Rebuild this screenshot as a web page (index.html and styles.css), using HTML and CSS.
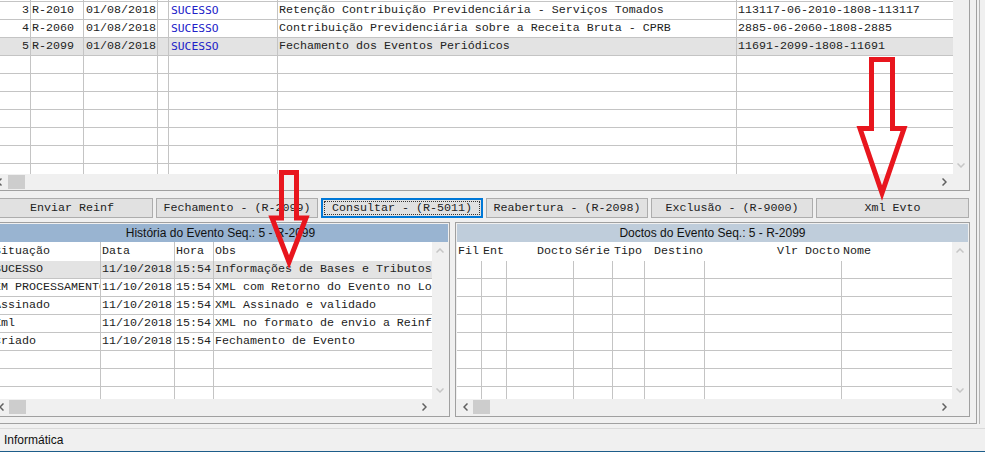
FILE: index.html
```html
<!DOCTYPE html>
<html lang="pt-BR">
<head>
    <meta charset="UTF-8">
    <title>Eventos Reinf</title>
    <link rel="stylesheet" href="styles.css">
</head>
<body>
    <div class="screen">
        <div class="form">
            <!-- Grade de eventos -->
            <div class="events">
                <div class="grid-body">
                    <div class="rows">
                        <div class="row evt-cols cut"><div class="cell"></div><div class="cell"></div><div class="cell"></div><div class="cell"></div><div class="cell"></div><div class="cell"></div><div class="cell"></div></div>
                        <div class="row evt-cols">
                            <div class="cell num">3</div><div class="cell">R-2010</div><div class="cell date">01/08/2018</div><div class="cell"></div>
                            <div class="cell ok"><span>SUCESSO</span></div><div class="cell">Retenção Contribuição Previdenciária - Serviços Tomados</div><div class="cell">113117-06-2010-1808-113117</div>
                        </div>
                        <div class="row evt-cols">
                            <div class="cell num">4</div><div class="cell">R-2060</div><div class="cell date">01/08/2018</div><div class="cell"></div>
                            <div class="cell ok"><span>SUCESSO</span></div><div class="cell">Contribuição Previdenciária sobre a Receita Bruta - CPRB</div><div class="cell">2885-06-2060-1808-2885</div>
                        </div>
                        <div class="row evt-cols sel">
                            <div class="cell num">5</div><div class="cell">R-2099</div><div class="cell date">01/08/2018</div><div class="cell"></div>
                            <div class="cell ok"><span>SUCESSO</span></div><div class="cell">Fechamento dos Eventos Periódicos</div><div class="cell">11691-2099-1808-11691</div>
                        </div>
                        <div class="row evt-cols"><div class="cell"></div><div class="cell"></div><div class="cell"></div><div class="cell"></div><div class="cell"></div><div class="cell"></div><div class="cell"></div></div>
                        <div class="row evt-cols"><div class="cell"></div><div class="cell"></div><div class="cell"></div><div class="cell"></div><div class="cell"></div><div class="cell"></div><div class="cell"></div></div>
                        <div class="row evt-cols"><div class="cell"></div><div class="cell"></div><div class="cell"></div><div class="cell"></div><div class="cell"></div><div class="cell"></div><div class="cell"></div></div>
                        <div class="row evt-cols"><div class="cell"></div><div class="cell"></div><div class="cell"></div><div class="cell"></div><div class="cell"></div><div class="cell"></div><div class="cell"></div></div>
                        <div class="row evt-cols"><div class="cell"></div><div class="cell"></div><div class="cell"></div><div class="cell"></div><div class="cell"></div><div class="cell"></div><div class="cell"></div></div>
                        <div class="row evt-cols"><div class="cell"></div><div class="cell"></div><div class="cell"></div><div class="cell"></div><div class="cell"></div><div class="cell"></div><div class="cell"></div></div>
                        <div class="row evt-cols"><div class="cell"></div><div class="cell"></div><div class="cell"></div><div class="cell"></div><div class="cell"></div><div class="cell"></div><div class="cell"></div></div>
                    </div>
                    <div class="vscroll">
                        <div class="sb-btn"><svg width="8" height="5" viewBox="0 0 8 5"><path class="arr-off" d="M0.5 0.5 4 4 7.5 0.5"/></svg></div>
                    </div>
                </div>
                <div class="hscroll">
                    <div class="sb-btn"><svg width="5" height="8" viewBox="0 0 5 8"><path class="arr" d="M4.5 0.5 1 4 4.5 7.5"/></svg></div>
                    <div class="thumb"></div>
                    <div class="track"></div>
                    <div class="sb-btn"><svg width="5" height="8" viewBox="0 0 5 8"><path class="arr" d="M0.5 0.5 4 4 0.5 7.5"/></svg></div>
                    <div class="corner"></div>
                </div>
            </div>

            <!-- Botões de ação -->
            <div class="actions">
                <button type="button" class="btn">Enviar Reinf</button>
                <button type="button" class="btn">Fechamento - (R-2099)</button>
                <button type="button" class="btn btn-focus">Consultar - (R-5011)</button>
                <button type="button" class="btn">Reabertura - (R-2098)</button>
                <button type="button" class="btn">Exclusão - (R-9000)</button>
                <button type="button" class="btn btn-xml">Xml Evto</button>
            </div>

            <div class="panels">
                <!-- História do evento -->
                <div class="panel history">
                    <div class="panel-title title-active">História do Evento Seq.: 5 - R-2099</div>
                    <div class="grid-body">
                        <div class="rows">
                            <div class="row hist-cols head"><div class="cell">Situação</div><div class="cell">Data</div><div class="cell">Hora</div><div class="cell">Obs</div></div>
                            <div class="row hist-cols sel"><div class="cell">SUCESSO</div><div class="cell">11/10/2018</div><div class="cell">15:54</div><div class="cell">Informações de Bases e Tributos</div></div>
                            <div class="row hist-cols"><div class="cell">EM PROCESSAMENTO</div><div class="cell">11/10/2018</div><div class="cell">15:54</div><div class="cell">XML com Retorno do Evento no Lote</div></div>
                            <div class="row hist-cols"><div class="cell">Assinado</div><div class="cell">11/10/2018</div><div class="cell">15:54</div><div class="cell">XML Assinado e validado</div></div>
                            <div class="row hist-cols"><div class="cell">Xml</div><div class="cell">11/10/2018</div><div class="cell">15:54</div><div class="cell">XML no formato de envio a Reinf</div></div>
                            <div class="row hist-cols"><div class="cell">Criado</div><div class="cell">11/10/2018</div><div class="cell">15:54</div><div class="cell">Fechamento de Evento</div></div>
                            <div class="row hist-cols"><div class="cell"></div><div class="cell"></div><div class="cell"></div><div class="cell"></div></div>
                            <div class="row hist-cols"><div class="cell"></div><div class="cell"></div><div class="cell"></div><div class="cell"></div></div>
                            <div class="row hist-cols"><div class="cell"></div><div class="cell"></div><div class="cell"></div><div class="cell"></div></div>
                        </div>
                        <div class="vscroll">
                            <div class="sb-btn"><svg width="8" height="5" viewBox="0 0 8 5"><path class="arr-off" d="M0.5 4.5 4 1 7.5 4.5"/></svg></div>
                            <div class="sb-btn"><svg width="8" height="5" viewBox="0 0 8 5"><path class="arr-off" d="M0.5 0.5 4 4 7.5 0.5"/></svg></div>
                        </div>
                    </div>
                    <div class="hscroll">
                        <div class="sb-btn"><svg width="5" height="8" viewBox="0 0 5 8"><path class="arr" d="M4.5 0.5 1 4 4.5 7.5"/></svg></div>
                        <div class="thumb"></div>
                        <div class="track"></div>
                        <div class="sb-btn"><svg width="5" height="8" viewBox="0 0 5 8"><path class="arr" d="M0.5 0.5 4 4 0.5 7.5"/></svg></div>
                        <div class="corner"></div>
                    </div>
                </div>

                <!-- Documentos do evento -->
                <div class="panel docs">
                    <div class="panel-title title-inactive">Doctos do Evento Seq.: 5 - R-2099</div>
                    <div class="grid-body">
                        <div class="rows">
                            <div class="row doc-cols head">
                                <div class="cell">Fil</div><div class="cell">Ent</div><div class="cell right">Docto</div><div class="cell">Série</div>
                                <div class="cell">Tipo</div><div class="cell right">Destino</div><div class="cell right">Vlr Docto</div><div class="cell">Nome</div>
                            </div>
                            <div class="row doc-cols"><div class="cell"></div><div class="cell"></div><div class="cell"></div><div class="cell"></div><div class="cell"></div><div class="cell"></div><div class="cell"></div><div class="cell"></div></div>
                            <div class="row doc-cols"><div class="cell"></div><div class="cell"></div><div class="cell"></div><div class="cell"></div><div class="cell"></div><div class="cell"></div><div class="cell"></div><div class="cell"></div></div>
                            <div class="row doc-cols"><div class="cell"></div><div class="cell"></div><div class="cell"></div><div class="cell"></div><div class="cell"></div><div class="cell"></div><div class="cell"></div><div class="cell"></div></div>
                            <div class="row doc-cols"><div class="cell"></div><div class="cell"></div><div class="cell"></div><div class="cell"></div><div class="cell"></div><div class="cell"></div><div class="cell"></div><div class="cell"></div></div>
                            <div class="row doc-cols"><div class="cell"></div><div class="cell"></div><div class="cell"></div><div class="cell"></div><div class="cell"></div><div class="cell"></div><div class="cell"></div><div class="cell"></div></div>
                            <div class="row doc-cols"><div class="cell"></div><div class="cell"></div><div class="cell"></div><div class="cell"></div><div class="cell"></div><div class="cell"></div><div class="cell"></div><div class="cell"></div></div>
                            <div class="row doc-cols"><div class="cell"></div><div class="cell"></div><div class="cell"></div><div class="cell"></div><div class="cell"></div><div class="cell"></div><div class="cell"></div><div class="cell"></div></div>
                            <div class="row doc-cols"><div class="cell"></div><div class="cell"></div><div class="cell"></div><div class="cell"></div><div class="cell"></div><div class="cell"></div><div class="cell"></div><div class="cell"></div></div>
                        </div>
                        <div class="vscroll">
                            <div class="sb-btn"><svg width="8" height="5" viewBox="0 0 8 5"><path class="arr-off" d="M0.5 4.5 4 1 7.5 4.5"/></svg></div>
                            <div class="sb-btn"><svg width="8" height="5" viewBox="0 0 8 5"><path class="arr-off" d="M0.5 0.5 4 4 7.5 0.5"/></svg></div>
                        </div>
                    </div>
                    <div class="hscroll">
                        <div class="sb-btn"><svg width="5" height="8" viewBox="0 0 5 8"><path class="arr" d="M4.5 0.5 1 4 4.5 7.5"/></svg></div>
                        <div class="thumb"></div>
                        <div class="track"></div>
                        <div class="sb-btn"><svg width="5" height="8" viewBox="0 0 5 8"><path class="arr" d="M0.5 0.5 4 4 0.5 7.5"/></svg></div>
                        <div class="corner"></div>
                    </div>
                </div>
            </div>
        </div>
        <div class="edge"></div>
    </div>

    <div class="status">Informática</div>

    <!-- Setas de destaque desenhadas sobre a tela -->
    <svg class="marks" width="985" height="452" viewBox="0 0 985 452">
        <path d="M281.5 172.5H296.5V218H306L289 262L272 218H281.5Z"/>
        <path d="M871.5 59.5H892.5V128.5H904L882 193L860 128.5H871.5Z"/>
    </svg>
</body>
</html>
```

FILE: styles.css
```css
* {
    box-sizing: border-box;
}

body {
    margin: 0;
    width: 985px;
    height: 452px;
    overflow: hidden;
    position: relative;
    background-color: #f0f0f0;
    font-family: "Liberation Mono", "Courier New", monospace;
    font-size: 11.67px;
    color: #222;
}

.screen {
    display: flex;
    height: 424px;
}

.form {
    flex: none;
    width: 986px;
    margin-left: -9px;
    padding-right: 6px;
    border-right: 1px solid #a0a0a0;
    border-bottom: 1px solid #a0a0a0;
}

.edge {
    flex: none;
    width: 6px;
    margin-left: 2px;
    border-left: 1px solid #b4b4b4;
}

/* Grids */
.events {
    border-right: 1px solid #a0a0a0;
    border-bottom: 1px solid #a0a0a0;
}

.grid-body {
    display: flex;
}

.events .grid-body {
    height: 174px;
}

.rows {
    flex: 1;
    min-width: 0;
    overflow: hidden;
    background-color: #fff;
}

.row {
    display: grid;
    height: 18px;
}

.row.cut {
    margin-top: -16px;
}

.row.sel {
    background-color: #e3e3e3;
}

.evt-cols {
    grid-template-columns: 40px 53px 74px 11px 109px 459px 216px;
}

.hist-cols {
    grid-template-columns: 108px 74px 39px 218px;
}

.doc-cols {
    grid-template-columns: 25px 25px 67px 39px 32px 60px 137px 110px;
}

.cell {
    padding: 0 1px;
    border-right: 1px solid #c4c4c4;
    border-bottom: 1px solid #c4c4c4;
    line-height: 17px;
    white-space: nowrap;
    overflow: hidden;
}

.cell:last-child {
    border-right: 0;
}

.cell.num,
.cell.right {
    text-align: right;
}

.cell.date {
    padding-left: 2px;
}

.cell.ok {
    padding-left: 2px;
    font-family: "DejaVu Sans Mono", monospace;
    font-size: 11.3px;
    color: #2020c8;
}

.head {
    height: 19px;
}

.head .cell {
    line-height: 19px;
    border-bottom: 0;
}

.docs .head .cell {
    border-right-color: transparent;
}

/* Scrollbars */
.vscroll {
    flex: none;
    width: 16px;
    display: flex;
    flex-direction: column;
    justify-content: space-between;
}

.events .vscroll {
    justify-content: flex-end;
}

.sb-btn {
    flex: none;
    width: 16px;
    height: 17px;
    display: flex;
    align-items: center;
    justify-content: center;
}

.hscroll {
    display: flex;
    height: 16px;
}

.hscroll .sb-btn {
    height: 16px;
}

.events .hscroll .sb-btn {
    width: 17px;
}

.thumb {
    flex: none;
    width: 17px;
    margin: 1px 0;
    background-color: #cdcdcd;
}

.track {
    flex: 1;
}

.corner {
    flex: none;
    width: 16px;
}

.arr,
.arr-off {
    fill: none;
    stroke-width: 1.5;
}

.arr {
    stroke: #606060;
}

.arr-off {
    stroke: #c6c6c6;
}

/* Botões */
.actions {
    display: flex;
    gap: 3px;
    margin-top: 7px;
}

.btn {
    flex: none;
    width: 162px;
    height: 20px;
    padding: 0;
    background-color: #e1e1e1;
    border: 1px solid #adadad;
    font: inherit;
    color: #222;
}

.btn-xml {
    width: 153px;
}

.btn-focus {
    border-color: #0078d7;
    box-shadow: inset 0 0 0 1px #0078d7;
    outline: 1px dotted #333;
    outline-offset: -4px;
}

/* Painéis inferiores */
.panels {
    display: flex;
    gap: 5px;
    margin-top: 4px;
}

.panel {
    flex: none;
    height: 195px;
    padding: 1px;
    border: 1px solid #a0a0a0;
}

.history {
    width: 459px;
}

.docs {
    width: 515px;
}

.panel .grid-body {
    height: 157px;
}

.panel-title {
    height: 18px;
    line-height: 18px;
    text-align: center;
    font-family: "Liberation Sans", Arial, sans-serif;
    font-size: 12px;
    color: #111;
}

.title-active {
    background-color: #99b4d1;
}

.title-inactive {
    background-color: #bfcddb;
}

/* Barra de status */
.status {
    margin-top: 4px;
    height: 24px;
    padding-left: 4px;
    border-top: 1px solid #dadada;
    border-bottom: 1px solid #1d5d8a;
    line-height: 22px;
    font-family: "Liberation Sans", Arial, sans-serif;
    font-size: 12px;
    color: #111;
}

.marks {
    position: absolute;
    top: 0;
    left: 0;
    pointer-events: none;
}

.marks path {
    fill: none;
    stroke: #e8161e;
    stroke-width: 5;
}
```
